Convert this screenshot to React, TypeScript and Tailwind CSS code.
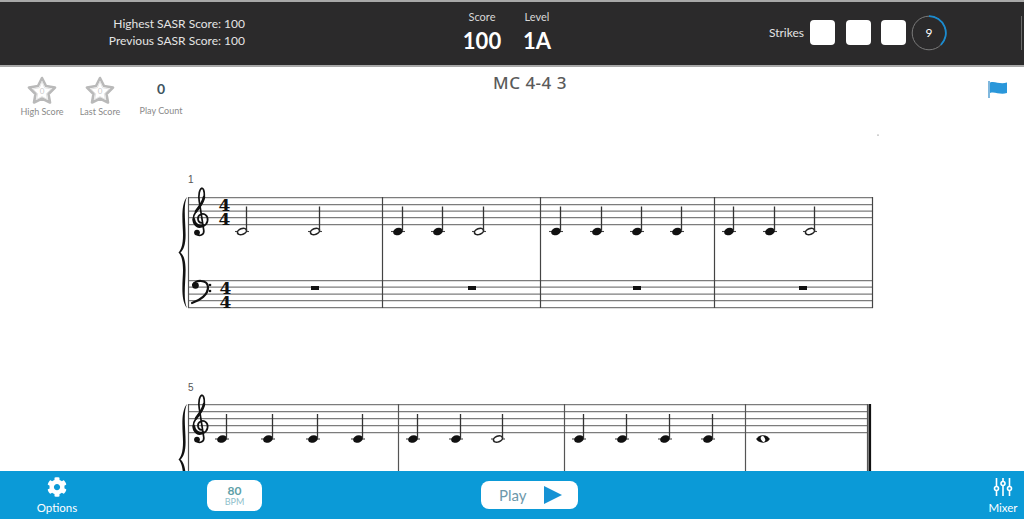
import { FaCog } from "react-icons/fa";

const FONT = "font-['Lato','Noto_Sans',sans-serif]";

function Star() {
  return (
    <div className="relative h-[28px] w-[30px]">
      <svg viewBox="0 0 30 28" className="h-[28px] w-[30px]" aria-hidden="true">
        <path d="M15 2 L19 10 L28 11.5 L21.5 18 L23 26.5 L15 22.5 L7 26.5 L8.5 18 L2 11.5 L11 10 Z" fill="#fff" stroke="#b9b9b9" strokeWidth="2.6" strokeLinejoin="round" />
        <path d="M15 5.4 L17.6 11.8 L24.2 13 L19.3 17.7 L20.3 23.4 L15 20.6 L9.7 23.4 L10.7 17.7 L5.8 13 L12.4 11.8 Z" fill="#fff" stroke="#dcdcdc" strokeWidth="0.8" strokeLinejoin="round" />
      </svg>
      <span className="absolute inset-0 flex items-center justify-center pt-[1px] text-[8px] text-[#c9c9c9]">0</span>
    </div>
  );
}

function Note({ x, y, kind }: { x: number; y: number; kind: "q" | "h" | "w" }) {
  return (
    <g>
      <line x1={x - 7} x2={x + 7} y1={y} y2={y} stroke="#444" strokeWidth="1.1" />
      {kind === "q" && <ellipse cx={x} cy={y} rx="5" ry="3.6" fill="#111" transform={`rotate(-20 ${x} ${y})`} />}
      {kind === "h" && <ellipse cx={x} cy={y} rx="4.7" ry="2.9" fill="#fff" stroke="#222" strokeWidth="1.6" transform={`rotate(-20 ${x} ${y})`} />}
      {kind === "w" && (
        <>
          <ellipse cx={x} cy={y} rx="6.2" ry="3.7" fill="#111" />
          <ellipse cx={x} cy={y} rx="2" ry="3" fill="#fff" transform={`rotate(-25 ${x} ${y})`} />
        </>
      )}
      {kind !== "w" && <line x1={x + 4.5} x2={x + 4.5} y1={y - 1} y2={y - 25} stroke="#333" strokeWidth="1.3" />}
    </g>
  );
}

function Lines({ x1, x2, ys }: { x1: number; x2: number; ys: number[] }) {
  return (
    <>
      {ys.map((y) => (
        <line key={y} x1={x1} x2={x2} y1={y} y2={y} stroke="#7c7c7c" strokeWidth="1.25" />
      ))}
    </>
  );
}

function TrebleClef({ dy }: { dy: number }) {
  return (
    <g transform={`translate(0 ${dy})`} fill="none" stroke="#111" strokeLinecap="round">
      <path d="M201.5 223 C197.5 222.5 196.5 216.5 200.5 214.5 C205 212.5 208.5 216.5 207.5 221 C206.5 226 200 228.5 196.5 226 C192.5 223 192 217 196 211.5 C199 207 204 202 204.3 195.5 C204.5 191 203.3 188.2 201.8 188.2 C199.3 189 198.4 195 199.2 201 L203.8 230.5 C204.3 234.5 200 236.5 197.2 234.6" strokeWidth="1.7" />
      <path d="M196 211.5 C199 207 203 203 204 197" strokeWidth="2.6" />
      <path d="M193.8 219 C194.5 224.5 199 227 203.5 225.5" strokeWidth="2.4" />
      <circle cx="197" cy="232.6" r="2.9" fill="#111" stroke="none" />
    </g>
  );
}

function BassClef() {
  return (
    <g>
      <circle cx="195.5" cy="285.5" r="3.3" fill="#111" />
      <path d="M193 285 C194.5 279.8 207.5 278.8 208 287 C208.3 294.5 200 300.5 192 303" fill="none" stroke="#111" strokeWidth="2.2" strokeLinecap="round" />
      <circle cx="210" cy="285" r="1.3" fill="#111" />
      <circle cx="210" cy="291" r="1.3" fill="#111" />
    </g>
  );
}

function Brace({ dy }: { dy: number }) {
  return (
    <path
      transform={`translate(0 ${dy})`}
      d="M187 197 C180 205 183 225 183 235 C183 245 181 250 178.5 252.5 C181 255 183 260 183 270 C183 280 180 300 187 308 C183 300 185.6 282 185.6 270 C185.6 260 183.5 255 180.5 252.5 C183.5 250 185.6 245 185.6 235 C185.6 222 183 205 187 197 Z"
      fill="#111"
    />
  );
}

function TimeSig({ x, y1, y2 }: { x: number; y1: number; y2: number }) {
  return (
    <text textAnchor="middle" fontFamily="'DejaVu Serif', serif" fontWeight="900" fontSize="17" fill="#111">
      <tspan x={x} y={y1}>4</tspan>
      <tspan x={x} y={y2}>4</tspan>
    </text>
  );
}

function Rest({ x }: { x: number }) {
  return <rect x={x - 4} y={286} width={8} height={4} fill="#111" />;
}

const sys1: [number, "q" | "h"][] = [
  [242, "h"], [315, "h"], [398, "q"], [438, "q"], [479, "h"], [556, "q"], [597, "q"], [637, "q"], [677, "q"], [729, "q"], [770, "q"], [810, "h"],
];
const sys2: [number, "q" | "h" | "w"][] = [
  [222, "q"], [268, "q"], [313, "q"], [358, "q"], [413, "q"], [456, "q"], [498, "h"], [579, "q"], [622, "q"], [665, "q"], [708, "q"], [763, "w"],
];

function Score() {
  const t1 = [197.5, 204.5, 211, 217.5, 224.5];
  const b1 = [280.5, 287, 294, 300.5, 307.5];
  const t2 = [404.5, 411.5, 418.5, 425.5, 432.5];
  return (
    <svg viewBox="0 127 1024 344" className="block h-[344px] w-[1024px]" aria-label="Sheet music">
      <circle cx="878" cy="135" r="0.6" fill="#555" />
      <text x="188" y="183" fontFamily="'Liberation Sans', sans-serif" fontSize="10" fill="#555">1</text>
      <Brace dy={0} />
      <Lines x1={188} x2={873} ys={t1} />
      <Lines x1={188} x2={873} ys={b1} />
      <line x1="188.5" x2="188.5" y1="197" y2="308" stroke="#555" strokeWidth="1.2" />
      {[382.5, 540.5, 714.5, 872.5].map((x) => (
        <line key={x} x1={x} x2={x} y1="197" y2="308" stroke="#444" strokeWidth="1.2" />
      ))}
      <TrebleClef dy={0} />
      <BassClef />
      <TimeSig x={224.5} y1={211} y2={224.5} />
      <TimeSig x={225.5} y1={294} y2={308} />
      {sys1.map(([x, k]) => (
        <Note key={x} x={x} y={231.5} kind={k} />
      ))}
      {[315, 472, 637, 803].map((x) => (
        <Rest key={x} x={x} />
      ))}

      <text x="188" y="391" fontFamily="'Liberation Sans', sans-serif" fontSize="10" fill="#555">5</text>
      <Brace dy={207} />
      <Lines x1={188} x2={868} ys={t2} />
      <line x1="188.5" x2="188.5" y1="404" y2="471" stroke="#555" strokeWidth="1.2" />
      {[398.5, 564.5, 745.5, 867.5].map((x) => (
        <line key={x} x1={x} x2={x} y1="404" y2="471" stroke="#555" strokeWidth="1.2" />
      ))}
      <rect x="868.5" y="404" width="2.6" height="67" fill="#111" />
      <TrebleClef dy={207} />
      {sys2.map(([x, k]) => (
        <Note key={x} x={x} y={439} kind={k} />
      ))}
    </svg>
  );
}

function Box() {
  return <div className="h-[25px] w-[25px] rounded-[4px] bg-white" />;
}

export default function App() {
  return (
    <div className={`${FONT} flex h-[519px] w-[1024px] flex-col overflow-hidden bg-white`}>
      <header className="flex h-[67px] shrink-0 items-center border-y-2 border-[#a8a8a8] bg-[#2b2a2b] text-[#e4e4e4]">
        <div className="mb-[2px] w-[245px] shrink-0 text-right text-[12px] leading-[16.5px]">
          <div>Highest SASR Score: 100</div>
          <div>Previous SASR Score: 100</div>
        </div>
        <div className="-mt-[5px] ml-[218px] flex w-[38px] flex-col items-center">
          <span className="text-[11px] leading-[16px] text-[#d8d8d8]">Score</span>
          <span className="mt-[3px] text-[22px] font-bold leading-[26px] text-white">100</span>
        </div>
        <div className="-mt-[5px] ml-[21px] flex w-[30px] flex-col items-center">
          <span className="text-[11px] leading-[16px] text-[#d8d8d8]">Level</span>
          <span className="mt-[3px] text-[22px] font-bold leading-[26px] text-white">1A</span>
        </div>
        <div className="ml-auto mb-[2px] flex items-center">
          <span className="mr-[6px] text-[12px] text-[#e4e4e4]">Strikes</span>
          <div className="flex gap-[10.5px]">
            <Box />
            <Box />
            <Box />
          </div>
          <div className="relative ml-[5px] h-[36px] w-[36px]">
            <svg viewBox="0 0 36 36" className="h-[36px] w-[36px]" aria-hidden="true">
              <circle cx="18" cy="18" r="16.8" fill="none" stroke="#7a7a7a" strokeWidth="1" />
              <path d="M18 1.2 A16.8 16.8 0 0 1 29.9 29.9" fill="none" stroke="#1a8bd0" strokeWidth="1.8" />
            </svg>
            <span className="absolute inset-0 flex items-center justify-center text-[12px] text-white">9</span>
          </div>
          <div className="ml-[74px] mr-[2px] h-[34px] w-[1px] bg-[#6a6a6a]" />
        </div>
      </header>

      <main className="flex min-h-0 flex-1 flex-col bg-white">
        <div className="flex h-[60px] shrink-0 items-start">
          <div className="ml-[12px] flex w-[60px] flex-col items-center pt-[9px]">
            <Star />
            <span className="mt-[2px] text-[9px] leading-[12px] text-[#8a8a8a]">High Score</span>
          </div>
          <div className="ml-[-2px] flex w-[60px] flex-col items-center pt-[9px]">
            <Star />
            <span className="mt-[2px] text-[9px] leading-[12px] text-[#8a8a8a]">Last Score</span>
          </div>
          <div className="ml-[-1px] flex w-[64px] flex-col items-center pt-[12px]">
            <span className="text-[14px] font-bold leading-[20px] text-[#3f5560]">0</span>
            <span className="mt-[6px] text-[9px] leading-[12px] text-[#8a8a8a]">Play Count</span>
          </div>
          <div className="ml-[287px] w-[100px] pt-[5px] text-center font-['Noto_Sans',sans-serif] text-[17px] font-medium leading-[22px] tracking-[0.5px] text-[#5a5a5a]">MC 4-4 3</div>
          <svg viewBox="0 0 20 17" className="ml-[408px] mt-[14px] h-[17px] w-[20px]" aria-hidden="true">
            <line x1="1" x2="1" y1="0" y2="17" stroke="#4a9ad0" strokeWidth="1.4" />
            <path d="M2 1.5 C7 -0.5 12 4 19 1.5 L19 12 C12 14.5 7 10 2 12 Z" fill="#2a97da" />
          </svg>
        </div>
        <Score />
      </main>

      <footer className="flex h-[48px] shrink-0 items-center bg-[#0b9ad7] text-white">
        <div className="ml-[27px] flex w-[60px] flex-col items-center pt-[2px]">
          <FaCog className="h-[20px] w-[20px]" />
          <span className="mt-[4px] text-[11.5px] leading-[14px]">Options</span>
        </div>
        <div className="ml-[120px] flex h-[31px] w-[55px] flex-col items-center justify-center rounded-[8px] bg-white">
          <span className="text-[12px] font-bold leading-[12px] text-[#5e9fa8]">80</span>
          <span className="text-[9px] leading-[9px] text-[#8fc0cb]">BPM</span>
        </div>
        <div className="ml-[219px] flex h-[28px] w-[97px] items-center rounded-[8px] bg-white pl-[18px]">
          <span className="text-[15px] leading-[20px] text-[#6d98ab]">Play</span>
          <svg viewBox="0 0 18 18" className="ml-[17px] h-[18px] w-[18px]" aria-hidden="true">
            <path d="M0 0 L18 9 L0 18 Z" fill="#1592d4" />
          </svg>
        </div>
        <div className="ml-auto mr-[6px] flex w-[30px] flex-col items-center pt-[2px]">
          <svg viewBox="0 0 20 20" className="h-[20px] w-[20px]" aria-hidden="true" fill="none" stroke="#fff" strokeWidth="1.6">
            <path d="M3.5 1 V9 M3.5 14 V19 M10 1 V4 M10 9 V19 M16.5 1 V9 M16.5 14 V19" />
            <circle cx="3.5" cy="11.5" r="2" />
            <circle cx="10" cy="6.5" r="2" />
            <circle cx="16.5" cy="11.5" r="2" />
          </svg>
          <span className="mt-[4px] text-[11.5px] leading-[14px]">Mixer</span>
        </div>
      </footer>
    </div>
  );
}
